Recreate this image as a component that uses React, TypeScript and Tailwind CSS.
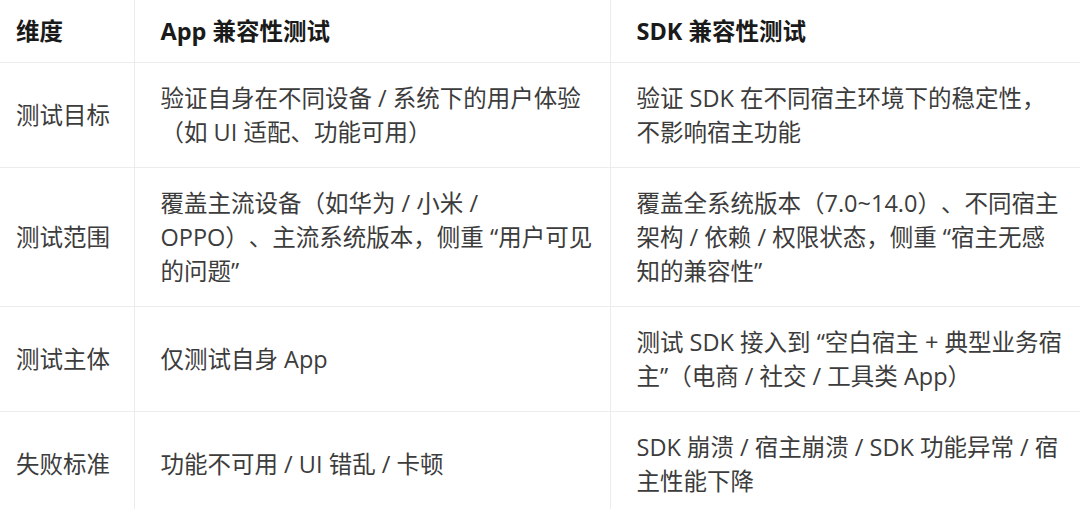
const rows: { dim: string; app: string[]; sdk: string[] }[] = [
  {
    dim: "测试目标",
    app: ["验证自身在不同设备 / 系统下的用户体验", "（如 UI 适配、功能可用）"],
    sdk: ["验证 SDK 在不同宿主环境下的稳定性，", "不影响宿主功能"],
  },
  {
    dim: "测试范围",
    app: ["覆盖主流设备（如华为 / 小米 /", "OPPO）、主流系统版本，侧重 “用户可见", "的问题”"],
    sdk: ["覆盖全系统版本（7.0~14.0）、不同宿主", "架构 / 依赖 / 权限状态，侧重 “宿主无感", "知的兼容性”"],
  },
  {
    dim: "测试主体",
    app: ["仅测试自身 App"],
    sdk: ["测试 SDK 接入到 “空白宿主 + 典型业务宿", "主”（电商 / 社交 / 工具类 App）"],
  },
  {
    dim: "失败标准",
    app: ["功能不可用 / UI 错乱 / 卡顿"],
    sdk: ["SDK 崩溃 / 宿主崩溃 / SDK 功能异常 / 宿", "主性能下降"],
  },
];

function Lines({ lines }: { lines: string[] }) {
  return (
    <>
      {lines.map((l, i) => (
        <div key={i} className="whitespace-nowrap">
          {l}
        </div>
      ))}
    </>
  );
}

export default function App() {
  return (
    <div
      className="w-[1080px] h-[509px] overflow-hidden bg-white text-[23.5px] leading-[34px] text-[#3c3c3c] [text-spacing-trim:space-all]"
      style={{ fontFamily: '"Open Sans", "Noto Sans CJK SC", sans-serif' }}
    >
      <table className="w-full table-fixed border-collapse">
        <colgroup>
          <col className="w-[134px]" />
          <col className="w-[476px]" />
          <col />
        </colgroup>
        <thead>
          <tr className="border-b border-[#ececec]">
            <th className="pl-4 py-[14px] text-left font-bold text-[#1a1a1a]">维度</th>
            <th className="pl-[26px] py-[14px] text-left font-bold text-[#1a1a1a] border-l border-[#ececec]">
              App 兼容性测试
            </th>
            <th className="pl-[26px] py-[14px] text-left font-bold text-[#1a1a1a] border-l border-[#ececec]">
              SDK 兼容性测试
            </th>
          </tr>
        </thead>
        <tbody>
          {rows.map((r) => (
            <tr key={r.dim} className="border-b border-[#ececec] last:border-b-0">
              <td className="pl-4 py-[18px] align-middle">{r.dim}</td>
              <td className="pl-[26px] py-[18px] align-middle border-l border-[#ececec]">
                <Lines lines={r.app} />
              </td>
              <td className="pl-[26px] py-[18px] align-middle border-l border-[#ececec]">
                <Lines lines={r.sdk} />
              </td>
            </tr>
          ))}
        </tbody>
      </table>
    </div>
  );
}
